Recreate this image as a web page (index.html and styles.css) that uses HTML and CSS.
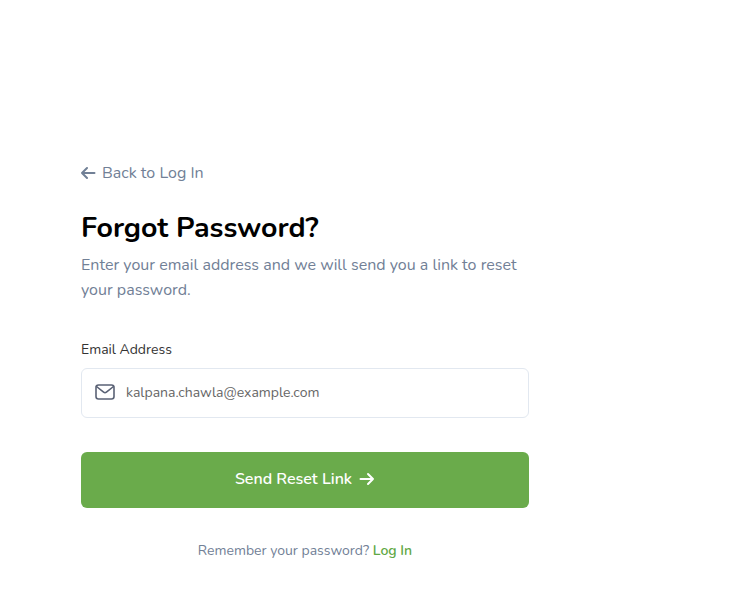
FILE: index.html
```html
<!DOCTYPE html>
<html lang="en">
<head>
  <meta charset="UTF-8">
  <title>Forgot Password</title>
  <link rel="stylesheet" href="styles.css">
</head>
<body>
  <div class="container">
    <a class="back-link" href="#">
      <svg width="16" height="14" viewBox="0 0 16 14" fill="none" stroke="#718096" stroke-width="2" stroke-linecap="round" stroke-linejoin="round"><path d="M13.5 7H1M6 2 1 7 6 12"/></svg>
      <span>Back to Log In</span>
    </a>
    <h1>Forgot Password?</h1>
    <p class="intro">Enter your email address and we will send you a link to reset your password.</p>
    <label class="field-label" for="email">Email Address</label>
    <div class="input-box">
      <svg width="20" height="16" viewBox="0 0 20 16" fill="none" stroke="#5a6275" stroke-width="1.6" stroke-linecap="round" stroke-linejoin="round"><rect x="1" y="1" width="18" height="14" rx="2.5"/><path d="M1.5 2.5 8.6 8.2a2.2 2.2 0 0 0 2.8 0L18.5 2.5"/></svg>
      <input id="email" type="text" value="kalpana.chawla@example.com">
    </div>
    <button class="send-btn">
      <span>Send Reset Link</span>
      <svg width="16" height="14" viewBox="0 0 16 14" fill="none" stroke="#fff" stroke-width="2" stroke-linecap="round" stroke-linejoin="round"><path d="M1.5 7H14M9 2 14 7 9 12"/></svg>
    </button>
    <p class="login-note">Remember your password? <a href="#">Log In</a></p>
  </div>
</body>
</html>
```

FILE: styles.css
```css
body {
  margin: 0;
  background-color: #fff;
  font-family: "Nunito", "Noto Sans", "Open Sans", sans-serif;
}

.container {
  width: 448px;
  padding: 163px 0 0 81px;
}

.back-link {
  display: flex;
  align-items: center;
  gap: 5px;
  height: 20px;
  color: #718096;
  font-size: 16px;
  text-decoration: none;
}

h1 {
  margin: 21px 0 0;
  color: #000;
  font-size: 28.5px;
  font-weight: 700;
  line-height: 48px;
}

.intro {
  margin: 1px 0 0;
  color: #718096;
  font-size: 16px;
  line-height: 25px;
}

.field-label {
  display: block;
  margin-top: 37px;
  color: #333;
  font-size: 14px;
  line-height: 20px;
}

.input-box {
  display: flex;
  align-items: center;
  gap: 11px;
  height: 46px;
  margin-top: 8px;
  padding: 0 14px 2px 13px;
  border: 1px solid #e2e8f0;
  border-radius: 6px;
}

.input-box input {
  flex: 1;
  border: none;
  outline: none;
  padding: 0;
  color: #666;
  font-family: inherit;
  font-size: 14px;
}

.send-btn {
  display: flex;
  align-items: center;
  justify-content: center;
  gap: 7px;
  width: 100%;
  height: 56px;
  margin-top: 34px;
  padding-bottom: 3px;
  border: none;
  border-radius: 6px;
  background-color: #6aab4b;
  color: #fff;
  font-family: inherit;
  font-size: 16px;
  font-weight: 600;
}

.login-note {
  margin: 33px 0 0;
  color: #718096;
  font-size: 14px;
  line-height: 20px;
  text-align: center;
}

.login-note a {
  color: #5fa845;
  font-weight: 600;
  text-decoration: none;
}
```
